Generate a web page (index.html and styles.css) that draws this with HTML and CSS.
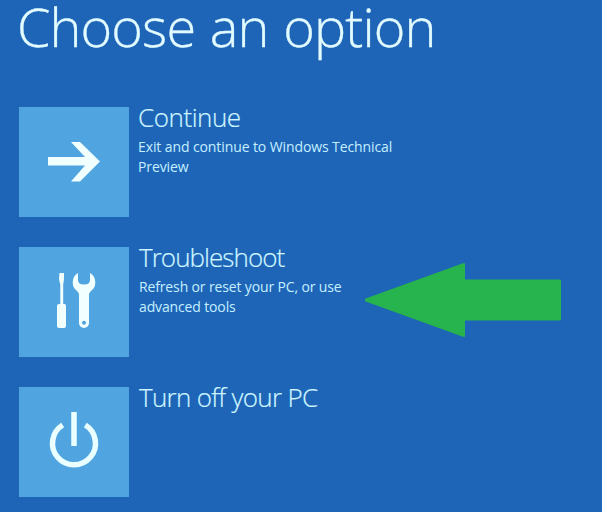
FILE: index.html
```html
<!DOCTYPE html>
<html lang="en">
<head>
<meta charset="utf-8">
<title>Choose an option</title>
<link rel="stylesheet" href="styles.css">
</head>
<body>
<main class="screen">
  <h1 class="title">Choose an option</h1>
  <div class="options">
    <div class="option">
      <svg class="tile" viewBox="0 0 110 110"><path d="M29 50H66L52 35H61L81 54.500L61 74.500H52L66 58.500H29Z"/></svg>
      <div class="copy">
        <h2 class="name continue">Continue</h2>
        <p class="desc continue-desc">Exit and continue to Windows Technical<br>Preview</p>
      </div>
    </div>
    <div class="option">
      <svg class="tile" viewBox="0 0 110 110">
        <path d="M40.500 26H45V32L44.200 38V57H45.500Q47 57 47 59V79Q47 81 45 81H40Q38 81 38 79V59Q38 57 40 57H41.300V38L40 32Z"/>
        <path fill-rule="evenodd" d="M59 26C52.500 29 52 40 57.500 43.500Q60 45.500 60 48V76A5 5 0 0 0 70 76V48Q70 45.500 72.500 43.500C78 40 77.500 29 71 26V33Q71 37.500 65 37.500Q59 37.500 59 33ZM65 73.700A2 2 0 1 1 65 77.700A2 2 0 1 1 65 73.700Z"/>
      </svg>
      <div class="copy shifted">
        <h2 class="name troubleshoot">Troubleshoot</h2>
        <p class="desc">Refresh or reset your PC, or use<br>advanced tools</p>
      </div>
      <svg class="pointer" viewBox="0 0 198 76"><path d="M2 37.500L100 2V18.500H196V57.500H100V74L2 38.500Z"/></svg>
    </div>
    <div class="option">
      <svg class="tile" viewBox="0 0 110 110"><path class="line" d="M43.700 38A21.500 21.500 0 1 0 66.300 38M55 25V59"/></svg>
      <div class="copy shifted">
        <h2 class="name turn-off">Turn off your PC</h2>
      </div>
    </div>
  </div>
</main>
</body>
</html>
```
FILE: styles.css
```css
* { box-sizing: border-box; }
body {
  margin: 0;
  background: #1e65b7;
  color: #e2fbff;
  font-family: "Open Sans", sans-serif;
}
.screen { height: 512px; overflow: hidden; padding-left: 19px; }
h1, h2, p { margin: 0; font-weight: 300; white-space: nowrap; }
.title { margin-left: -2px; font-size: 54px; line-height: 52px; letter-spacing: -0.9px; word-spacing: 1.6px; -webkit-text-stroke: 0.3px #e2fbff; }
.options { display: flex; flex-direction: column; gap: 30px; padding-top: 55px; }
.option { position: relative; display: flex; height: 110px; }
.tile { flex: none; width: 110px; height: 110px; background: #50a5e1; fill: #f2ffff; }
.tile .line { fill: none; stroke: #eaffff; stroke-width: 5.500; }
.copy { margin: -4px 0 0 9px; }
.copy.shifted { margin-left: 10px; }
.name { font-size: 26px; line-height: 28px; color: #d0f6ff; -webkit-text-stroke: 0.2px #d0f6ff; }
.continue { letter-spacing: -0.45px; }
.troubleshoot { letter-spacing: -0.95px; }
.turn-off { letter-spacing: -0.7px; }
.desc { margin-top: 6px; font-size: 14px; line-height: 20px; font-weight: 400; color: #c5f0ff; letter-spacing: -0.14px; }
.continue-desc { letter-spacing: -0.1px; }
.pointer { position: absolute; left: 345px; top: 15px; width: 198px; height: 76px; fill: #27b34d; stroke: #27b34d; stroke-width: 2; stroke-linejoin: round; }
```
